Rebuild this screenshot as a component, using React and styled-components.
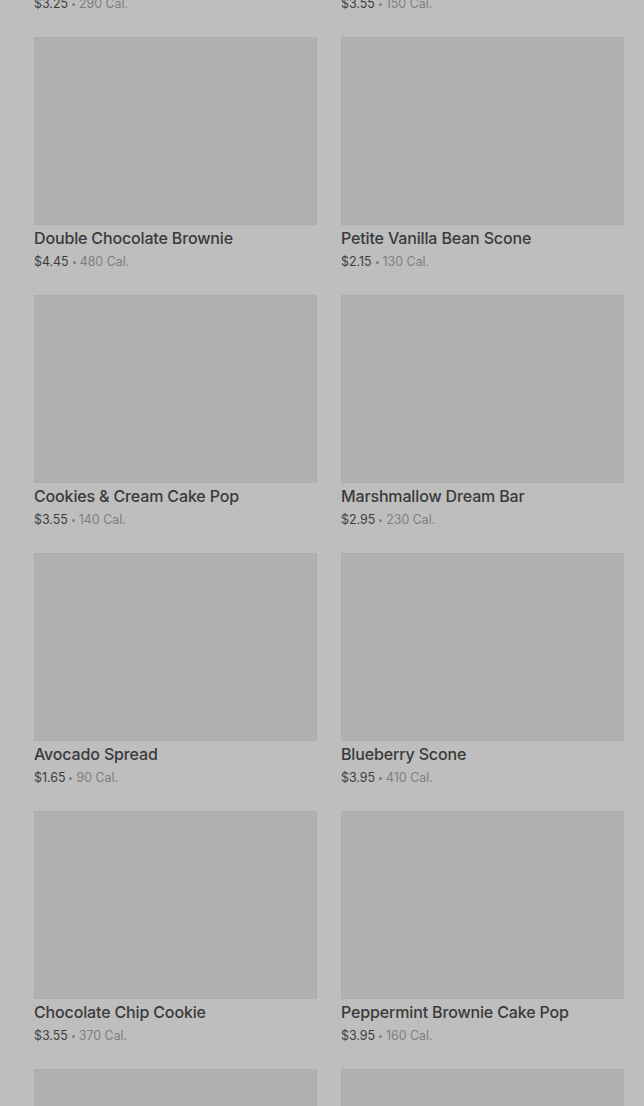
import React from "react";
import styled, { createGlobalStyle } from "styled-components";

const Global = createGlobalStyle`
  html, body { margin: 0; padding: 0; background: #bebebe; }
  body { font-family: Inter, "Noto Sans", sans-serif; overflow: hidden; }
`;

const Page = styled.div`
  height: 1106px;
  overflow: hidden;
  background: #bebebe;
`;

const Grid = styled.div`
  display: grid;
  grid-template-columns: 283px 283px;
  column-gap: 24px;
  padding: 0 20px 0 34px;
  margin-top: -221px;
`;

const Card = styled.div`
  display: flex;
  flex-direction: column;
  height: 258px;
`;

const Thumb = styled.div`
  height: 188px;
  background: #b0b0b0;
  box-shadow: inset 0 0 0 1px #adadad;
`;

const Name = styled.div`
  margin-top: 2px;
  font-size: 16px;
  line-height: 22px;
  font-weight: 500;
  color: #3a3a3a;
  letter-spacing: -0.15px;
`;

const Meta = styled.div`
  display: flex;
  align-items: center;
  margin-top: 4px;
  font-size: 12.4px;
  line-height: 18px;
  color: #7e7e7e;
`;

const Price = styled.span`
  color: #3d3d3d;
`;

const Dot = styled.span`
  display: inline-block;
  width: 3px;
  height: 3px;
  border-radius: 50%;
  background: #7e7e7e;
  margin: 1px 4px 0;
`;

const items = [
  ["Butter Croissant", "$3.25", "290"],
  ["Glazed Doughnut", "$3.55", "150"],
  ["Double Chocolate Brownie", "$4.45", "480"],
  ["Petite Vanilla Bean Scone", "$2.15", "130"],
  ["Cookies & Cream Cake Pop", "$3.55", "140"],
  ["Marshmallow Dream Bar", "$2.95", "230"],
  ["Avocado Spread", "$1.65", "90"],
  ["Blueberry Scone", "$3.95", "410"],
  ["Chocolate Chip Cookie", "$3.55", "370"],
  ["Peppermint Brownie Cake Pop", "$3.95", "160"],
  ["Lemon Loaf", "$3.45", "470"],
  ["Cinnamon Coffee Cake", "$3.75", "380"],
];

export default function App() {
  return (
    <Page>
      <Global />
      <Grid>
        {items.map(([name, price, cal]) => (
          <Card key={name}>
            <Thumb />
            <Name>{name}</Name>
            <Meta>
              <Price>{price}</Price>
              <Dot />
              <span>{cal} Cal.</span>
            </Meta>
          </Card>
        ))}
      </Grid>
    </Page>
  );
}
